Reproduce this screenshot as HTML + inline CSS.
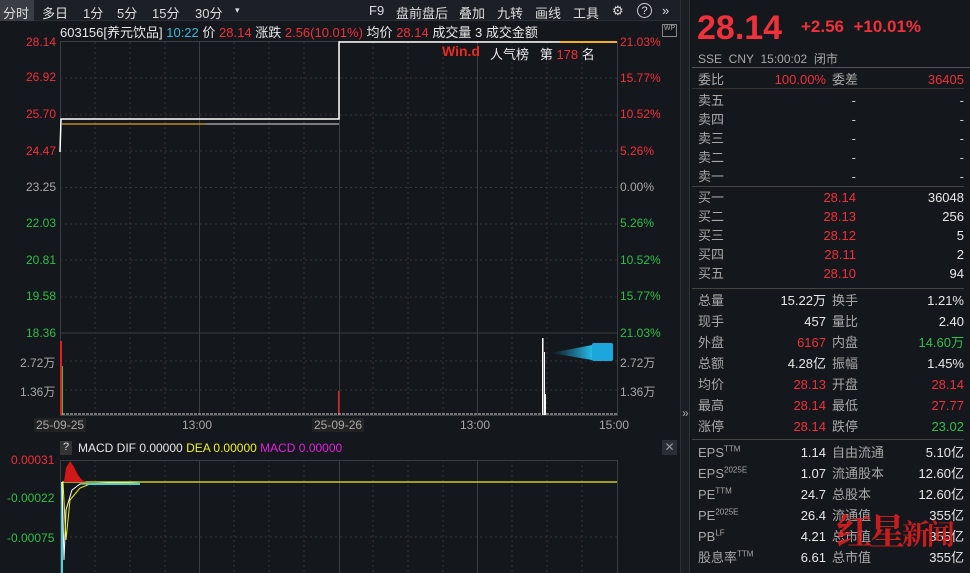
<!DOCTYPE html>
<html><head><meta charset="utf-8"><style>
*{margin:0;padding:0;box-sizing:border-box}
body{width:970px;height:573px;background:#14171c;font-family:"Liberation Sans","Noto Sans CJK SC",sans-serif;color:#c8c8c8;position:relative;overflow:hidden;font-size:13px}
.a{position:absolute;white-space:nowrap}
.r{color:#f0303a}.g{color:#2fbf4a}.w{color:#e8e8e8}.gy{color:#a8a8a8}
.tb span{position:absolute;top:3px;font-size:13px;color:#ddd}
.ax{font-size:12px}
.row{position:absolute;left:698px;width:266px;height:19px;font-size:13px;line-height:19px}
.row .l{position:absolute;left:0}.row .m{position:absolute;right:138px}.row .b{position:absolute;right:108px}.row .n{position:absolute;left:134px}.row .v{position:absolute;right:0}
sup{font-size:8px;line-height:0}
</style></head><body>
<div class="a" style="left:0;top:0;width:680px;height:21px;background:#1c1f25;border-bottom:1px solid #2a2d33"></div>
<div class="a" style="left:0;top:0;width:34px;height:21px;background:#3a3d44"></div>
<div class="tb">
<span style="left:3px">分时</span><span style="left:42px">多日</span><span style="left:83px">1分</span><span style="left:117px">5分</span><span style="left:152px">15分</span><span style="left:195px">30分</span><span style="left:235px;font-size:9px;top:5px">▾</span>
<span style="left:369px">F9</span><span style="left:396px">盘前盘后</span><span style="left:459px">叠加</span><span style="left:497px">九转</span><span style="left:535px">画线</span><span style="left:573px">工具</span><span style="left:612px">⚙</span><span style="left:637px;border:1px solid #ccc;border-radius:50%;width:15px;height:15px;font-size:11px;text-align:center;line-height:14px">?</span><span style="left:662px">»</span>
</div>
<div class="a" style="left:60px;top:22px;font-size:13px"><span class="w">603156[养元饮品]</span> <span style="color:#3ab8d8">10:22</span> <span class="w">价</span> <span class="r">28.14</span> <span class="w">涨跌</span> <span class="r">2.56(10.01%)</span> <span class="w">均价</span> <span class="r">28.14</span> <span class="w">成交量 3 成交金额</span></div>
<div class="a" style="left:662px;top:24px;width:15px;height:13px;border:1px solid #888;font-size:7px;color:#aaa;text-align:center">WP</div>
<svg class="a" style="left:0;top:0" width="680" height="573">
<g stroke="#3a3d42" stroke-width="1">
<rect x="60.5" y="41.5" width="557" height="374" fill="none"/>
<line x1="60" y1="333" x2="617" y2="333"/>
<line x1="199.5" y1="42" x2="199.5" y2="415"/><line x1="339.5" y1="42" x2="339.5" y2="415"/><line x1="477.5" y1="42" x2="477.5" y2="415"/>
<rect x="60.5" y="460.5" width="557" height="120" fill="none"/>
<line x1="199.5" y1="460" x2="199.5" y2="573"/><line x1="339.5" y1="460" x2="339.5" y2="573"/><line x1="477.5" y1="460" x2="477.5" y2="573"/>
</g>
<g stroke="#33363b" stroke-dasharray="2,3">
<line x1="60" y1="78" x2="617" y2="78"/><line x1="60" y1="115" x2="617" y2="115"/><line x1="60" y1="151" x2="617" y2="151"/><line x1="60" y1="187.5" x2="617" y2="187.5"/><line x1="60" y1="224" x2="617" y2="224"/><line x1="60" y1="260" x2="617" y2="260"/><line x1="60" y1="297" x2="617" y2="297"/>
<line x1="60" y1="361" x2="617" y2="361"/><line x1="60" y1="390" x2="617" y2="390"/>
<line x1="60" y1="537" x2="617" y2="537"/>
<path d="M95 42V415M130 42V415M165 42V415M234 42V415M269 42V415M304 42V415M373 42V415M408 42V415M443 42V415M512 42V415M547 42V415M582 42V415M95 460V573M130 460V573M165 460V573M234 460V573M269 460V573M304 460V573M373 460V573M408 460V573M443 460V573M512 460V573M547 460V573M582 460V573"/>
</g>
<path d="M60 152L61 119L339 119V42H617" stroke="#fff" stroke-width="1.5" fill="none"/>
<path d="M62 124H205" stroke="#e0a030" stroke-width="1.2"/>
<path d="M205 124H339" stroke="#ddd" stroke-width="1"/>
<path d="M560 42H617" stroke="#f0b020" stroke-width="2"/>
<rect x="60" y="341" width="2" height="74" fill="#e02020"/><rect x="62" y="366" width="1" height="49" fill="#2fbf4a"/>
<rect x="338" y="391" width="1.5" height="24" fill="#e02020"/>
<path d="M62 414H617" stroke="#ccc" stroke-width="1" stroke-dasharray="3,1"/>
<rect x="542" y="338" width="1.5" height="77" fill="#fff"/><rect x="544" y="352" width="1" height="63" fill="#fff"/><rect x="545" y="394" width="1" height="21" fill="#fff"/>
<defs><linearGradient id="gr" x1="0" x2="1"><stop offset="0" stop-color="#1aa0d0" stop-opacity="0"/><stop offset="1" stop-color="#28b8e8"/></linearGradient></defs>
<path d="M551 353L592 345V360Z" fill="url(#gr)"/>
<rect x="592" y="343" width="21" height="18" rx="2" fill="#1da6dc"/>
<path d="M62 482H617" stroke="#f0f020" stroke-width="1.2"/>
<path d="M64 482L66 468L70 461L74 467L78 475L82 480L86 482Z" fill="#d01818"/>
<path d="M62 482V573" stroke="#4ad0d8" stroke-width="2"/>
<path d="M62 482L64 560L66 510L72 490L80 484L140 482" stroke="#fff" fill="none"/>
<path d="M63 482L66 540L70 500L80 488L90 484L140 482" stroke="#f0f020" fill="none"/>
<path d="M86 484H140" stroke="#4ad0d8" stroke-width="2"/>
</svg>
<div class="ax">
<div class="a r" style="left:26px;top:35px">28.14</div><div class="a r" style="left:26px;top:70px">26.92</div><div class="a r" style="left:26px;top:107px">25.70</div><div class="a r" style="left:26px;top:144px">24.47</div><div class="a gy" style="left:26px;top:180px">23.25</div><div class="a g" style="left:26px;top:216px">22.03</div><div class="a g" style="left:26px;top:253px">20.81</div><div class="a g" style="left:26px;top:289px">19.58</div><div class="a g" style="left:26px;top:326px">18.36</div>
<div class="a gy" style="left:20px;top:354px">2.72万</div><div class="a gy" style="left:20px;top:383px">1.36万</div>
<div class="a r" style="left:620px;top:35px">21.03%</div><div class="a r" style="left:620px;top:71px">15.77%</div><div class="a r" style="left:620px;top:107px">10.52%</div><div class="a r" style="left:620px;top:144px">5.26%</div><div class="a gy" style="left:620px;top:180px">0.00%</div><div class="a g" style="left:620px;top:216px">5.26%</div><div class="a g" style="left:620px;top:253px">10.52%</div><div class="a g" style="left:620px;top:289px">15.77%</div><div class="a g" style="left:620px;top:326px">21.03%</div>
<div class="a gy" style="left:620px;top:354px">2.72万</div><div class="a gy" style="left:620px;top:383px">1.36万</div>
<div class="a gy" style="left:34px;top:418px;background:#222;padding:0 2px">25-09-25</div><div class="a gy" style="left:182px;top:418px">13:00</div><div class="a gy" style="left:312px;top:418px;background:#222;padding:0 2px">25-09-26</div><div class="a gy" style="left:460px;top:418px">13:00</div><div class="a gy" style="left:599px;top:418px">15:00</div>
<div class="a r" style="left:11px;top:453px">0.00031</div><div class="a g" style="left:7px;top:491px">-0.00022</div><div class="a g" style="left:7px;top:531px">-0.00075</div>
</div>
<div class="a" style="left:442px;top:43px;font-size:14px;font-weight:bold;color:#e82a20">Win.d</div>
<div class="a w" style="left:490px;top:44px">人气榜 &nbsp; 第 <span class="r">178</span> 名</div>
<div class="a" style="left:60px;top:441px;width:12px;height:14px;background:#333;font-size:11px;text-align:center;color:#ddd">?</div>
<div class="a" style="left:78px;top:441px;font-size:12px"><span class="w">MACD DIF 0.00000</span> <span style="color:#f0f020">DEA 0.00000</span> <span style="color:#e020e0">MACD 0.00000</span></div>
<div class="a" style="left:662px;top:440px;width:15px;height:15px;background:#2a2d33;color:#999;font-size:12px;text-align:center">✕</div>
<div class="a" style="left:680px;top:0;width:10px;height:573px;background:#1b1e23;border-left:1px solid #2d3036;border-right:1px solid #2d3036"></div>
<div class="a gy" style="left:682px;top:406px;font-size:12px">»</div>
<div class="a r" style="left:697px;top:8px;font-size:34px;font-weight:bold;line-height:40px">28.14</div>
<div class="a r" style="left:801px;top:17px;font-size:17px;font-weight:bold;line-height:20px">+2.56 &nbsp;+10.01%</div>
<div class="a gy" style="left:698px;top:52px;font-size:12px;line-height:14px">SSE &nbsp;CNY &nbsp;15:00:02 &nbsp;闭市</div>
<div class="a" style="left:692px;top:67px;width:278px;border-top:1px solid #555"></div>
<div class="row" style="top:70px"><span class="l gy">委比</span><span class="m r">100.00%</span><span class="n gy">委差</span><span class="v r">36405</span></div>
<div class="a" style="left:692px;top:88px;width:272px;border-top:1px solid #333"></div>
<div class="row" style="top:91px"><span class="l gy">卖五</span><span class="b">-</span><span class="v">-</span></div>
<div class="row" style="top:110px"><span class="l gy">卖四</span><span class="b">-</span><span class="v">-</span></div>
<div class="row" style="top:129px"><span class="l gy">卖三</span><span class="b">-</span><span class="v">-</span></div>
<div class="row" style="top:148px"><span class="l gy">卖二</span><span class="b">-</span><span class="v">-</span></div>
<div class="row" style="top:167px"><span class="l gy">卖一</span><span class="b">-</span><span class="v">-</span></div>
<div class="a" style="left:692px;top:186px;width:272px;border-top:1px solid #444"></div>
<div class="row" style="top:188px"><span class="l gy">买一</span><span class="b r">28.14</span><span class="v w">36048</span></div>
<div class="row" style="top:207px"><span class="l gy">买二</span><span class="b r">28.13</span><span class="v w">256</span></div>
<div class="row" style="top:226px"><span class="l gy">买三</span><span class="b r">28.12</span><span class="v w">5</span></div>
<div class="row" style="top:245px"><span class="l gy">买四</span><span class="b r">28.11</span><span class="v w">2</span></div>
<div class="row" style="top:264px"><span class="l gy">买五</span><span class="b r">28.10</span><span class="v w">94</span></div>
<div class="a" style="left:692px;top:288px;width:272px;border-top:1px solid #444"></div>
<div class="row" style="top:291px"><span class="l gy">总量</span><span class="m w">15.22万</span><span class="n gy">换手</span><span class="v w">1.21%</span></div>
<div class="row" style="top:312px"><span class="l gy">现手</span><span class="m w">457</span><span class="n gy">量比</span><span class="v w">2.40</span></div>
<div class="row" style="top:333px"><span class="l gy">外盘</span><span class="m r">6167</span><span class="n gy">内盘</span><span class="v g">14.60万</span></div>
<div class="row" style="top:354px"><span class="l gy">总额</span><span class="m w">4.28亿</span><span class="n gy">振幅</span><span class="v w">1.45%</span></div>
<div class="row" style="top:375px"><span class="l gy">均价</span><span class="m r">28.13</span><span class="n gy">开盘</span><span class="v r">28.14</span></div>
<div class="row" style="top:396px"><span class="l gy">最高</span><span class="m r">28.14</span><span class="n gy">最低</span><span class="v r">27.77</span></div>
<div class="row" style="top:417px"><span class="l gy">涨停</span><span class="m r">28.14</span><span class="n gy">跌停</span><span class="v g">23.02</span></div>
<div class="a" style="left:692px;top:439px;width:272px;border-top:1px solid #444"></div>
<div class="row" style="top:443px"><span class="l gy">EPS<sup>TTM</sup></span><span class="m w">1.14</span><span class="n gy">自由流通</span><span class="v w">5.10亿</span></div>
<div class="row" style="top:464px"><span class="l gy">EPS<sup>2025E</sup></span><span class="m w">1.07</span><span class="n gy">流通股本</span><span class="v w">12.60亿</span></div>
<div class="row" style="top:485px"><span class="l gy">PE<sup>TTM</sup></span><span class="m w">24.7</span><span class="n gy">总股本</span><span class="v w">12.60亿</span></div>
<div class="row" style="top:506px"><span class="l gy">PE<sup>2025E</sup></span><span class="m w">26.4</span><span class="n gy">流通值</span><span class="v w">355亿</span></div>
<div class="row" style="top:527px"><span class="l gy">PB<sup>LF</sup></span><span class="m w">4.21</span><span class="n gy">总市值</span><span class="v w">355亿</span></div>
<div class="row" style="top:548px"><span class="l gy">股息率<sup>TTM</sup></span><span class="m w">6.61</span><span class="n gy">总市值</span><span class="v w">355亿</span></div>
<div class="a" style="left:836px;top:508px;font-size:36px;font-weight:bold;color:rgba(230,30,30,0.85);font-family:'Noto Serif CJK SC',serif;letter-spacing:-3px;line-height:44px">红星<span style="font-size:28px">新闻</span></div>
</body></html>
